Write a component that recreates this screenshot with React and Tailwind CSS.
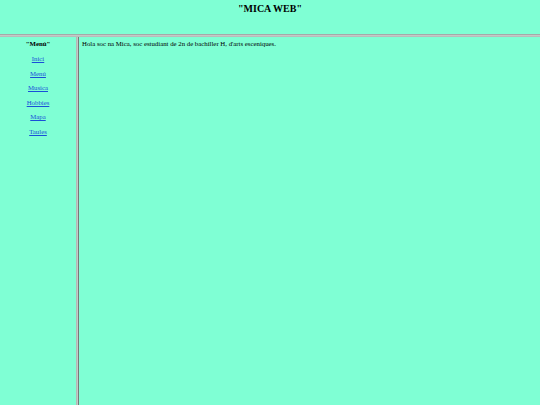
export default function App() {
  const links = ['Inici', 'Menú', 'Musica', 'Hobbies', 'Mapa', 'Taules']

  return (
    <div className="w-[540px] h-[405px] bg-[#7fffd4] flex flex-col overflow-hidden" style={{ fontFamily: '"Liberation Serif", "Times New Roman", serif' }}>
      {/* top frame */}
      <div className="h-[34px] flex justify-center pt-[3px]">
        <h2 className="text-[10px] font-bold leading-[12px] text-black">"MICA WEB"</h2>
      </div>

      {/* frame border */}
      <div className="h-[3px] bg-[#c4c8c6] border-t border-[#a4aaa8] border-b border-b-[#b8bcba]" />

      <div className="flex flex-1">
        {/* menu frame */}
        <div className="w-[76px] flex flex-col items-center pt-[3px] text-[6.8px] leading-[8px]">
          <p className="font-bold text-black">"Menú"</p>
          <div className="flex flex-col items-center gap-[6.5px] mt-[7px]">
            {links.map(l => (
              <a key={l} href="#" className="text-[#1a4fd8] underline">{l}</a>
            ))}
          </div>
        </div>

        {/* frame border */}
        <div className="w-[3px] bg-[#c4c8c6] border-l border-[#b4b8b6] border-r border-r-[#747a78]" />

        {/* main frame */}
        <div className="flex-1 pl-[3px] pt-[3px] text-[6.8px] leading-[8px] text-black">
          Hola soc na Mica, soc estudiant de 2n de bachiller H, d'arts esceniques.
        </div>
      </div>
    </div>
  )
}
